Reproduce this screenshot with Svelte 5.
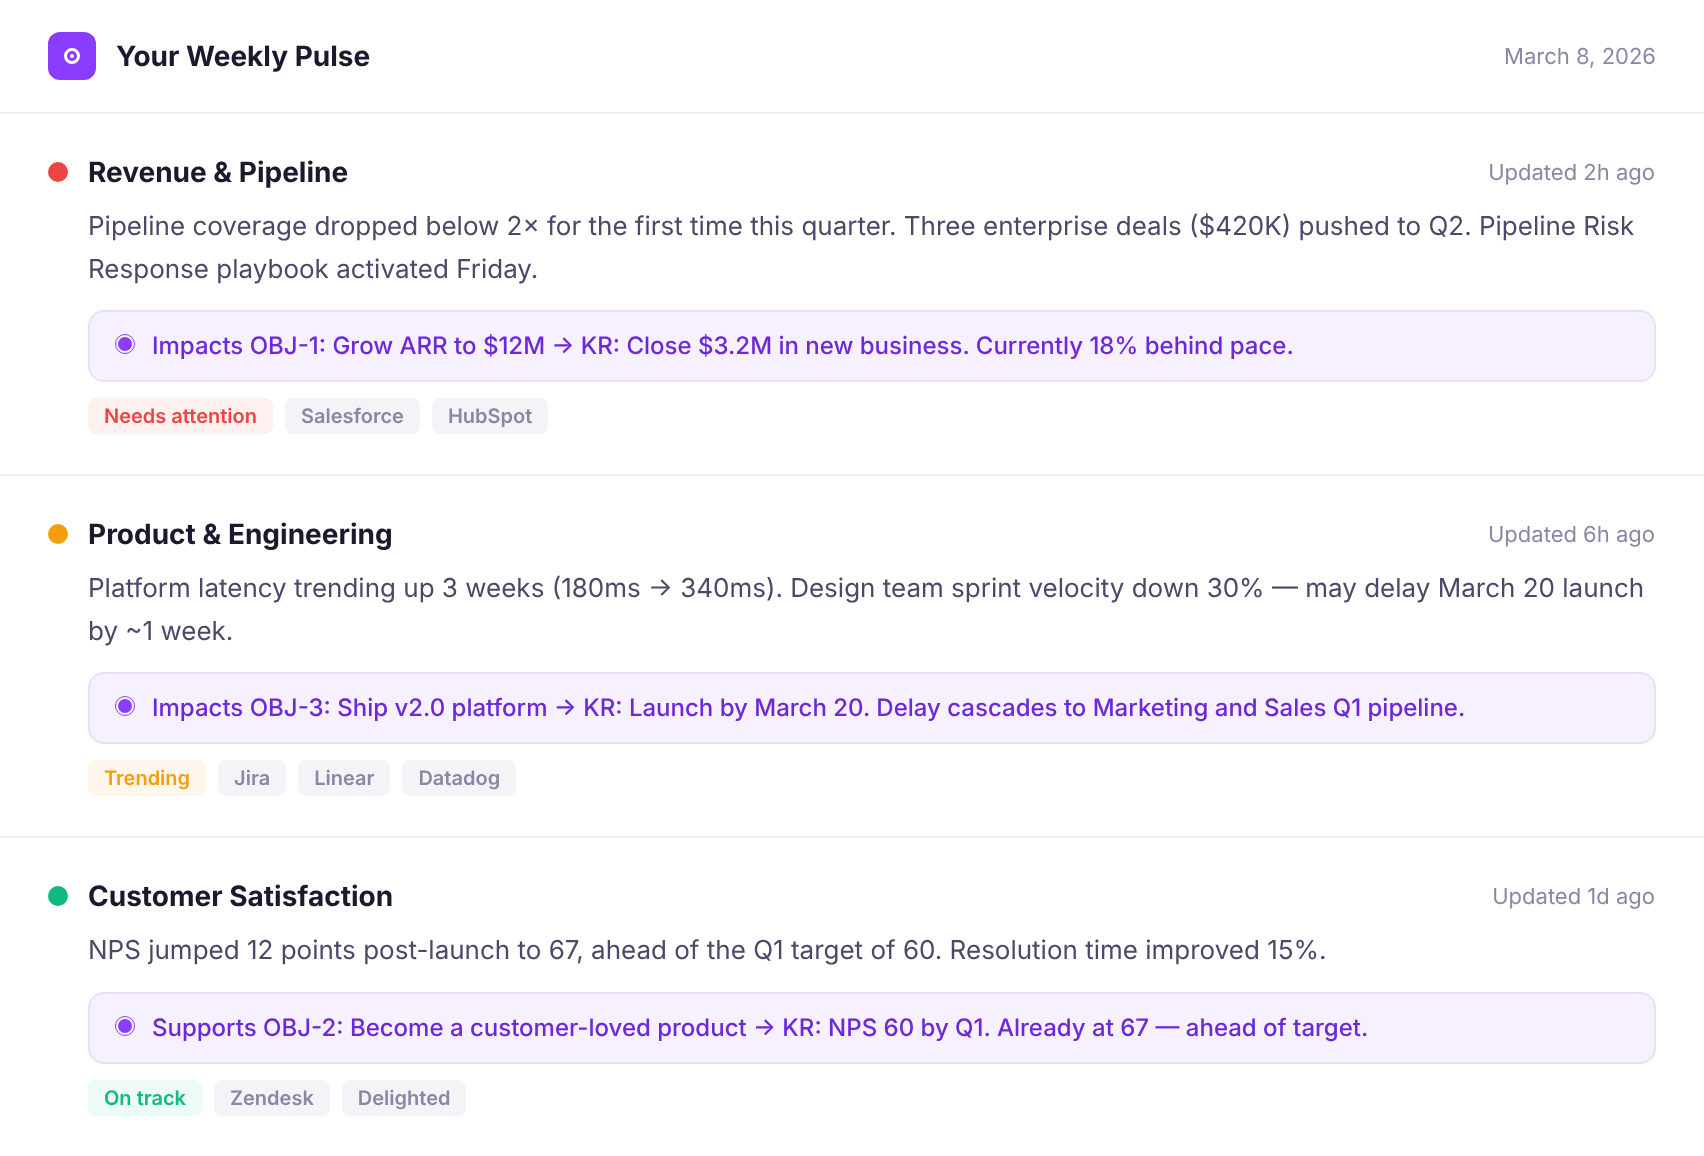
<script>
  const sections = [
    {
      title: 'Revenue & Pipeline',
      tone: 'red',
      updated: 'Updated 2h ago',
      body: 'Pipeline coverage dropped below 2× for the first time this quarter. Three enterprise deals ($420K) pushed to Q2. Pipeline Risk Response playbook activated Friday.',
      impact: 'Impacts OBJ-1: Grow ARR to $12M → KR: Close $3.2M in new business. Currently 18% behind pace.',
      status: 'Needs attention',
      tags: ['Salesforce', 'HubSpot']
    },
    {
      title: 'Product & Engineering',
      tone: 'amber',
      updated: 'Updated 6h ago',
      body: 'Platform latency trending up 3 weeks (180ms → 340ms). Design team sprint velocity down 30% — may delay March 20 launch by ~1 week.',
      impact: 'Impacts OBJ-3: Ship v2.0 platform → KR: Launch by March 20. Delay cascades to Marketing and Sales Q1 pipeline.',
      status: 'Trending',
      tags: ['Jira', 'Linear', 'Datadog']
    },
    {
      title: 'Customer Satisfaction',
      tone: 'green',
      updated: 'Updated 1d ago',
      body: 'NPS jumped 12 points post-launch to 67, ahead of the Q1 target of 60. Resolution time improved 15%.',
      impact: 'Supports OBJ-2: Become a customer-loved product → KR: NPS 60 by Q1. Already at 67 — ahead of target.',
      status: 'On track',
      tags: ['Zendesk', 'Delighted']
    }
  ];
</script>

<div class="pulse">
  <header class="pulse__header">
    <div class="pulse__brand">
      <span class="pulse__icon" aria-hidden="true"><span class="pulse__ring"></span></span>
      <h1 class="pulse__title">Your Weekly Pulse</h1>
    </div>
    <span class="pulse__date">March 8, 2026</span>
  </header>

  {#each sections as s}
    <section class="item">
      <div class="item__head">
        <span class="item__dot {s.tone}"></span>
        <h2 class="item__title">{s.title}</h2>
        <span class="item__updated">{s.updated}</span>
      </div>
      <p class="item__body">{s.body}</p>
      <div class="impact">
        <span class="impact__mark" aria-hidden="true"></span>
        <span class="impact__text">{s.impact}</span>
      </div>
      <div class="tags">
        <span class="tag status {s.tone}">{s.status}</span>
        {#each s.tags as t}
          <span class="tag">{t}</span>
        {/each}
      </div>
    </section>
  {/each}
</div>

<style>
  :global(body) {
    background: #fff;
  }

  .pulse {
    font-family: Inter, 'Liberation Sans', sans-serif;
    color: #1a1a2e;
    text-rendering: geometricPrecision;
    will-change: transform;
  }

  .pulse__header {
    display: flex;
    align-items: center;
    justify-content: space-between;
    padding: 32px 48px;
    border-bottom: 2px solid #f0f0f0;
  }

  .pulse__brand {
    display: flex;
    align-items: center;
    gap: 20px;
  }

  .pulse__icon {
    display: flex;
    align-items: center;
    justify-content: center;
    width: 48px;
    height: 48px;
    border-radius: 12px;
    background: #8b3dff;
  }

  .pulse__ring {
    width: 16px;
    height: 16px;
    box-sizing: border-box;
    border: 3px solid #fff;
    border-radius: 50%;
    display: flex;
    align-items: center;
    justify-content: center;
  }

  .pulse__ring::after {
    content: '';
    width: 4px;
    height: 4px;
    border-radius: 50%;
    background: #fff;
  }

  .pulse__title {
    margin: 0;
    font-size: 28px;
    font-weight: 700;
    line-height: 36px;
  }

  .pulse__date {
    padding-top: 2px;
    font-size: 22px;
    color: #8888a4;
  }

  .item {
    padding: 40px 48px;
    border-bottom: 2px solid #f0f0f0;
  }

  .item:last-child {
    border-bottom: none;
  }

  .item__head {
    display: flex;
    align-items: center;
    gap: 20px;
    margin-bottom: 16px;
  }

  .item__dot {
    flex-shrink: 0;
    width: 20px;
    height: 20px;
    border-radius: 50%;
  }

  .item__dot.red { background: #ef4444; }
  .item__dot.amber { background: #f59e0b; }
  .item__dot.green { background: #10b981; }

  .item__title {
    flex: 1;
    margin: 0;
    font-size: 28px;
    font-weight: 700;
    line-height: 36px;
  }

  .item__updated {
    padding: 2px 1px 0 0;
    font-size: 22px;
    color: #8888a4;
  }

  .item__body {
    margin: 0 0 19px 40px;
    font-size: 26px;
    line-height: 42.5px;
    color: #4a4a68;
  }

  .impact {
    display: flex;
    align-items: center;
    gap: 17px;
    margin: 0 0 16px 40px;
    padding: 16px 25px;
    border: 2px solid #e9dfff;
    border-radius: 16px;
    background: #f6f0ff;
  }

  .impact__mark {
    flex-shrink: 0;
    width: 20px;
    height: 20px;
    box-sizing: border-box;
    margin-top: -4px;
    border-radius: 50%;
    background: #8b3dff;
    border: 3px solid #f9f5ff;
    outline: 1px solid #8b3dff;
    outline-offset: -1px;
  }

  .impact__text {
    font-size: 24px;
    font-weight: 500;
    line-height: 36px;
    color: #6d28d9;
  }

  .tags {
    display: flex;
    gap: 12px;
    margin-left: 40px;
  }

  .tag {
    padding: 0 16px;
    font-size: 20px;
    font-weight: 600;
    line-height: 36px;
    border-radius: 8px;
    background: #f5f3f8;
    color: #8888a4;
  }

  .tag.status.red { background: #fff0f0; color: #ef4444; }
  .tag.status.amber { background: #fff7eb; color: #f59e0b; }
  .tag.status.green { background: #ecfbf5; color: #10b981; }
</style>
